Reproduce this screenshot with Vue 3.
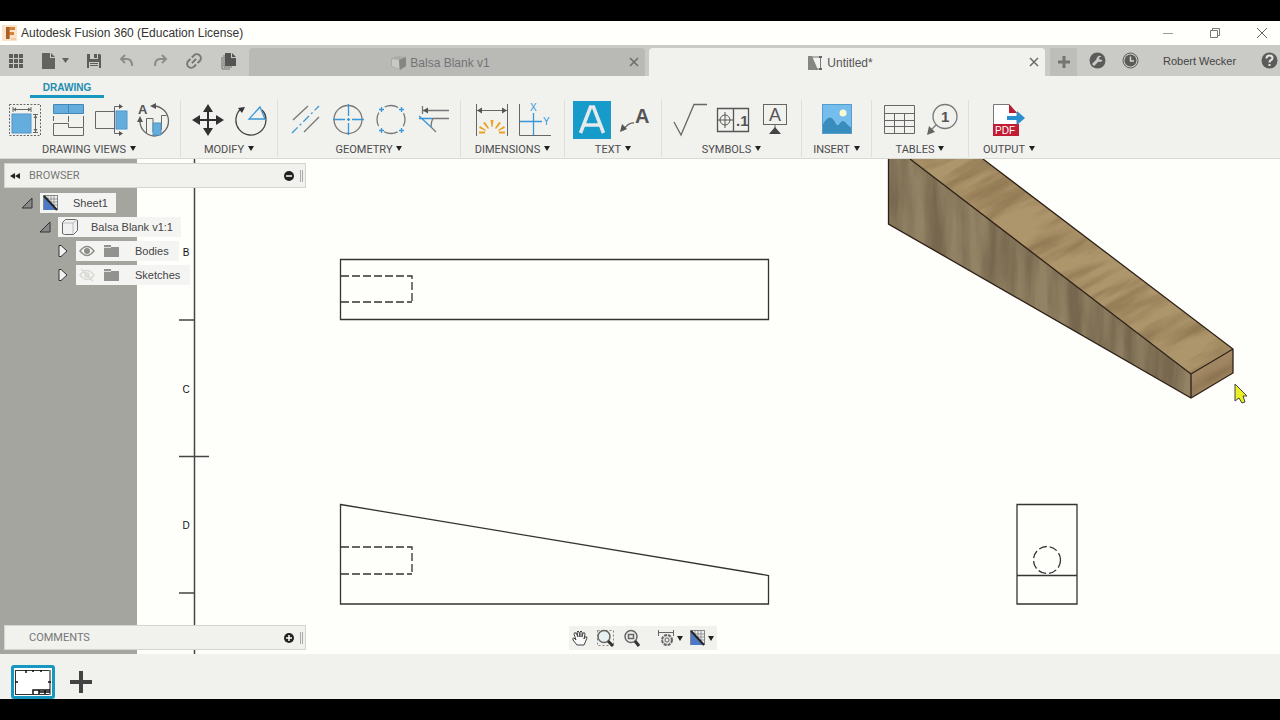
<script setup>
import { ref } from 'vue'

const documentTabs = ref([
  { name: 'Balsa Blank v1', kind: 'model', active: false },
  { name: 'Untitled*', kind: 'drawing', active: true },
])
</script>

<template>
  <div class="app">
    <header class="titlebar">
      <svg class="logo" width="15" height="16" viewBox="0 0 15 16">
        <rect x="0" y="0" width="15" height="16" fill="#fbe3cc" />
        <path d="M4 2h9v3H7.500v2H12v3H7.500v4H4z" fill="#d98434" />
        <path d="M4 2h3.500v12H4z" fill="#a9602a" />
        <path d="M9 14h5" stroke="#e9b27f" />
      </svg>
      <h1>Autodesk Fusion 360 (Education License)</h1>
      <div class="window-buttons">
        <button aria-label="Minimize"><svg width="12" height="12"><path d="M1 6.500h10" stroke="#999" /></svg></button>
        <button aria-label="Restore"><svg width="12" height="12" fill="none" stroke="#777"><path d="M1.500 3.500h7v7h-7zM3.500 3.500v-2h7v7h-2" /></svg></button>
        <button aria-label="Close"><svg width="12" height="12" fill="none" stroke="#666"><path d="M1 1l10 10M11 1L1 11" /></svg></button>
      </div>
    </header>

    <div class="tabbar">
      <div class="quick">
        <button aria-label="Data panel">
          <svg width="16" height="16" fill="#5c5c5a"><path d="M1 1h4v4H1zM6 1h4v4H6zM11 1h4v4h-4zM1 6h4v4H1zM6 6h4v4H6zM11 6h4v4h-4zM1 11h4v4H1zM6 11h4v4H6zM11 11h4v4h-4z" /></svg>
        </button>
        <button aria-label="File">
          <svg width="28" height="18"><path d="M1 1h8v5h5v11H1zM10 1l4 4h-4z" fill="#626260" /><path d="M21 6h7l-3.500 5z" fill="#626260" /></svg>
        </button>
        <button aria-label="Save">
          <svg width="16" height="16"><path d="M1 1h13l1 1v13H1z" fill="#5c5c5a" /><path d="M4 1h8v5H4zM3 9h10v6H3z" fill="#cacac6" /><path d="M8 1h3v4H8zM4 10h8v1H4zM4 12h8v1H4z" fill="#5c5c5a" /></svg>
        </button>
        <button aria-label="Undo">
          <svg width="16" height="16" fill="none" stroke="#8c8c89" stroke-width="2"><path d="M6 2L2 6l4 4M2 6h6q5 0 5 7" /></svg>
        </button>
        <button aria-label="Redo">
          <svg width="16" height="16" fill="none" stroke="#8c8c89" stroke-width="2"><path d="M10 2l4 4-4 4M14 6H8q-5 0-5 7" /></svg>
        </button>
        <button aria-label="Link">
          <svg width="18" height="18" viewBox="0 0 18 18" fill="none" stroke="#777775" stroke-width="2"><g transform="rotate(-45 9 9)"><path d="M8 5H5a4 4 0 0 0 0 8h3M10 5h3a4 4 0 0 1 0 8h-3M6 9h6" /></g></svg>
        </button>
        <button aria-label="Copies">
          <svg width="18" height="18"><path d="M2 5v12h8M4 3v12h8" fill="none" stroke="#70706e" /><path d="M5 1h6v5h5v8H5zM12 1l4 4h-4z" fill="#545452" /></svg>
        </button>
      </div>

      <nav class="tabs" aria-label="Documents">
        <div v-for="tab in documentTabs" :key="tab.name" class="tab" :class="{ active: tab.active }">
          <button class="tab-name">
            <svg v-if="tab.kind === 'model'" width="17" height="16"><path d="M1 3l7-2 8 1v9l-6 4-9-4z" fill="#aaaaa7" /><path d="M2 4l7 1v9l-7-3z" fill="#c8c8c4" /><path d="M9 5l7-3v9l-6 4z" fill="#858583" /></svg>
            <svg v-else width="17" height="16"><path d="M1 1h4l6 14H1z" fill="#858583" /><path d="M5 2h9M13.500 1v13M9 14h5" fill="none" stroke="#777" /><path d="M12 1h3v2h-3zM12 13h3v2h-3z" fill="#666" /></svg>
            <span>{{ tab.name }}</span>
          </button>
          <button class="tab-close" :aria-label="'Close ' + tab.name"><svg width="10" height="10"><path d="M1 1l8 8M9 1L1 9" stroke="#6b6b69" stroke-width="1.500" /></svg></button>
        </div>
      </nav>

      <button class="new-tab" aria-label="New document"><svg width="14" height="14"><path d="M7 1v12M1 7h12" stroke="#747472" stroke-width="3" /></svg></button>
      <div class="account">
        <button aria-label="Extensions"><svg width="17" height="17"><circle cx="8.500" cy="8.500" r="8" fill="#5b5b59" /><path d="M4 13l5-5" stroke="#cacac6" stroke-width="3" /><path d="M12.500 4.500a3 3 0 1 0 1 3.500l-3-.5-.5-2z" fill="#cacac6" /></svg></button>
        <button aria-label="Job status"><svg width="17" height="17"><circle cx="8.500" cy="8.500" r="7.500" fill="none" stroke="#5b5b59" /><circle cx="8.500" cy="8.500" r="6" fill="#5b5b59" /><path d="M8.500 4.500v4.500H12" fill="none" stroke="#d3d3cf" stroke-width="1.500" /></svg></button>
        <button class="user">Robert Wecker</button>
        <button class="help" aria-label="Help"><svg width="17" height="17"><circle cx="8.500" cy="8.500" r="8" fill="#5b5b59" /><path d="M5.500 6.500q0-3 3-3t3 2.500q0 1.500-2 2.500-1 .5-1 2M8.500 12v2" fill="none" stroke="#e4e4e0" stroke-width="2" /></svg></button>
      </div>
    </div>

    <section class="ribbon" aria-label="Ribbon">
      <button class="workspace">DRAWING</button>
      <div class="groups">
        <div class="group first">
          <div class="tools">
            <button aria-label="Base view"><svg viewBox="0 0 40 40" fill="none" stroke="#666">
              <rect x="4.500" y="4.500" width="31" height="31" stroke-dasharray="2 1.500" />
              <rect x="7" y="14" width="19" height="19" fill="#65addd" stroke="#4f96c9" />
              <path d="M8 9.500h18M8 7v5M26 7v5M30.500 15v17M28 14.500h5M28 32.500h5" />
              <path d="M8 9.500l3-2v4zM26 9.500l-3-2v4zM30.500 15l-2 3h4zM30.500 32l-2-3h4z" fill="#666" stroke="none" />
            </svg></button>
            <button aria-label="Projected view"><svg viewBox="0 0 40 40" fill="none" stroke="#666">
              <path d="M5.500 4.500h30v9h-30z" fill="#65addd" stroke="#4288b7" /><path d="M20.500 4v10" stroke="#4288b7" />
              <path d="M5.500 16v5M35.500 16v11M20.500 16v6" /><path d="M5.500 23.500h15v4h15v8h-30z" />
            </svg></button>
            <button aria-label="Section view"><svg viewBox="0 0 40 40" fill="none" stroke="#666">
              <path d="M23 11.500H4.500v17H23" /><rect x="25" y="11" width="11" height="18" fill="#65addd" stroke="#4f96c9" />
              <path d="M30 6.500h-6.500v27H30" /><path d="M28 4l4 2.500-4 2.500zM28 31l4 2.500-4 2.500z" fill="#555" stroke="none" />
            </svg></button>
            <button aria-label="Detail view"><svg viewBox="0 0 40 40" fill="none" stroke="#666">
              <path d="M19 6a15 15 0 0 1 1 30A15 15 0 0 1 6 20" stroke-width="1.300" />
              <path d="M12.500 33V18.500H19V32M27.500 30V15.500h5" /><path d="M19 23h8v12h-8z" fill="#65addd" stroke="#4f96c9" />
              <path d="M16 6l6-3v6zM6 16l-3 6h6z" fill="#555" stroke="none" />
              <text x="4" y="14" class="glyph bold" font-size="13">A</text>
            </svg></button>
          </div>
          <button class="label">DRAWING VIEWS<i class="caret"></i></button>
        </div>

        <div class="group">
          <div class="tools">
            <button aria-label="Move"><svg viewBox="0 0 40 40" fill="#303030">
              <path d="M20 10v20M10 20h20" stroke="#303030" stroke-width="2" /><path d="M20 4l5 8H15zM20 36l5-8H15zM4 20l8-5v10zM36 20l-8-5v10z" />
            </svg></button>
            <button aria-label="Rotate"><svg viewBox="0 0 40 40" fill="none">
              <path d="M11 8A15 15 0 1 0 31 10Q35 14 35 19" stroke="#444" stroke-width="1.300" /><path d="M34 19H18L29 7z" stroke="#3997d7" stroke-width="1.300" />
              <path d="M7 8l7-1-3 6z" fill="#333" />
            </svg></button>
          </div>
          <button class="label">MODIFY<i class="caret"></i></button>
        </div>

        <div class="group">
          <div class="tools">
            <button aria-label="Centerline"><svg viewBox="0 0 40 40" fill="none" stroke="#777" stroke-width="1.300">
              <path d="M8 20L23 6M19 32l15-15" /><path d="M7 33L34 6" stroke="#3997d7" stroke-dasharray="8 3 2 3" />
            </svg></button>
            <button aria-label="Center mark"><svg viewBox="0 0 40 40" fill="none" stroke="#777" stroke-width="1.300">
              <circle cx="20" cy="19.500" r="14" /><path d="M5 19.500h12M19 19.500h3M24 19.500h12M20.500 4v12M20.500 18v3M20.500 23v12" stroke="#3997d7" />
            </svg></button>
            <button aria-label="Center mark pattern"><svg viewBox="0 0 40 40" fill="none" stroke="#777" stroke-width="1.300">
              <circle cx="20" cy="19.500" r="14" stroke-dasharray="14 8" stroke-dashoffset="7" />
              <path d="M8 9.500h5M10.500 7v5M28 9.500h5M30.500 7v5M8 30.500h5M10.500 28v5M28 30.500h5M30.500 28v5" stroke="#3997d7" />
            </svg></button>
            <button aria-label="Edge extension"><svg viewBox="0 0 40 40" fill="none" stroke="#777" stroke-width="1.300">
              <path d="M8.500 6v8M9 10.500h26M18 18.500h17M17 27l5 5M19 18q-2 4-2 9" /><path d="M5 18.500h13M5 16l12 11" stroke="#3997d7" />
              <path d="M9 10.500l5-3v6z" fill="#555" stroke="none" />
            </svg></button>
          </div>
          <button class="label">GEOMETRY<i class="caret"></i></button>
        </div>

        <div class="group wide">
          <div class="tools">
            <button aria-label="Dimension"><svg viewBox="0 0 40 40" fill="none" stroke="#666">
              <path d="M5.500 4v32M36.500 4v32M6 10.500h30" /><path d="M6 10.500l5-3v6zM36 10.500l-5-3v6z" fill="#555" stroke="none" />
              <path d="M19.500 20h3l-1 7h-1zM12 23l2-1 4 6-1 1zM30 23l-2-1-4 6 1 1zM8 28l1-2 6 4v1zM34 28l-1-2-6 4v1zM8 31.500h6v2H8zM34 31.500h-6v2h6z" fill="#eca126" stroke="none" />
            </svg></button>
            <button aria-label="Ordinate dimension"><svg viewBox="0 0 40 40" fill="none" stroke="#666">
              <path d="M5.500 4v31.500H37" /><path d="M6 21.500h22M19.500 13v22" stroke="#3997d7" stroke-width="1.300" />
              <text x="16" y="11" class="glyph blue" font-size="10">X</text><text x="29" y="25" class="glyph blue" font-size="10">Y</text>
            </svg></button>
          </div>
          <button class="label">DIMENSIONS<i class="caret"></i></button>
        </div>

        <div class="group">
          <div class="tools">
            <button aria-label="Text" aria-pressed="true"><svg viewBox="0 0 40 40">
              <rect x="1" y="1" width="38" height="38" fill="#179bcb" /><path d="M8.500 33L18.500 7h3l10 26M12 25h16" fill="none" stroke="#e5ebea" stroke-width="3.500" />
            </svg></button>
            <button aria-label="Leader note"><svg viewBox="0 0 40 40" fill="none" stroke="#666">
              <path d="M19 23q-5-1-11 7" stroke-width="1.300" /><path d="M5 32l2-8 5 5z" fill="#555" stroke="none" />
              <text x="20" y="23" class="glyph bold" font-size="20">A</text>
            </svg></button>
          </div>
          <button class="label">TEXT<i class="caret"></i></button>
        </div>

        <div class="group">
          <div class="tools">
            <button aria-label="Surface texture"><svg viewBox="0 0 40 40" fill="none" stroke="#666" stroke-width="1.300"><path d="M5 22l7 13L25 4.500h13" /></svg></button>
            <button aria-label="Feature control frame"><svg viewBox="0 0 40 40" fill="none" stroke="#555">
              <path d="M5.500 8.500h31v23h-31zM21.500 8.500v23" stroke-width="1.300" /><circle cx="13" cy="20" r="5" /><path d="M5 20h16M13 12v16" />
              <text x="24" y="26" class="glyph bold" font-size="15">.1</text>
            </svg></button>
            <button aria-label="Datum identifier"><svg viewBox="0 0 40 40" fill="none" stroke="#666">
              <rect x="8.500" y="4.500" width="23" height="20" /><path d="M20 24v5" /><path d="M20 27l6 7H14z" fill="#444" stroke="none" />
              <text x="14" y="21" class="glyph" font-size="18">A</text>
            </svg></button>
          </div>
          <button class="label">SYMBOLS<i class="caret"></i></button>
        </div>

        <div class="group insert">
          <div class="tools">
            <button aria-label="Insert image"><svg viewBox="0 0 40 40">
              <rect x="5" y="4" width="30" height="30" fill="#74bdec" /><path d="M5 26q8-16 14-2 2 3 4-1 3-4 6 0t6 5v6H5z" fill="#398dbd" /><circle cx="26" cy="13" r="3.500" fill="#fbf9cf" />
              <rect x="5.500" y="4.500" width="29" height="29" fill="none" stroke="#559dcc" />
            </svg></button>
          </div>
          <button class="label">INSERT<i class="caret"></i></button>
        </div>

        <div class="group">
          <div class="tools">
            <button aria-label="Table"><svg viewBox="0 0 40 40" fill="none" stroke="#666"><path d="M5.500 5.500h30v28h-30zM5.500 13.500h30M5.500 20.500h30M5.500 26.500h30M15.500 13.500v20M25.500 13.500v20" /></svg></button>
            <button aria-label="Balloon"><svg viewBox="0 0 40 40" fill="none" stroke="#777">
              <circle cx="23" cy="16.500" r="12" stroke-width="1.300" /><path d="M14 25l-6 6" stroke-width="1.300" /><path d="M5 35l2-9 6 6z" fill="#666" stroke="none" />
              <text x="19" y="22" class="glyph bold" font-size="15">1</text>
            </svg></button>
          </div>
          <button class="label">TABLES<i class="caret"></i></button>
        </div>

        <div class="group last">
          <div class="tools">
            <button aria-label="Export PDF"><svg viewBox="0 0 40 40">
              <path d="M4.500 4.500H20l8 9V35H4.500z" fill="#fff" stroke="#777" /><path d="M20 4l8 9h-8z" fill="#b91c33" /><path d="M4 24h26v12H4z" fill="#c21c34" />
              <path d="M18 16h10v-5l8 7-8 7v-5H18z" fill="#288fd1" /><text x="6" y="34" class="glyph white" font-size="10">PDF</text>
            </svg></button>
          </div>
          <button class="label">OUTPUT<i class="caret"></i></button>
        </div>
      </div>
    </section>

    <main class="workarea">
      <svg class="sheet" width="100%" height="100%" role="img" aria-label="Drawing sheet">
        <defs>
          <filter id="grainSide" x="0" y="0" width="100%" height="100%" color-interpolation-filters="sRGB">
            <feTurbulence type="fractalNoise" baseFrequency="0.060 0.008" numOctaves="4" seed="8" />
            <feColorMatrix values="0 0 0 0 .26  0 0 0 0 .21  0 0 0 0 .15  2.400 0 0 0 -.8" />
          </filter>
          <filter id="grainTop" x="0" y="0" width="100%" height="100%" color-interpolation-filters="sRGB">
            <feTurbulence type="fractalNoise" baseFrequency="0.012 0.070" numOctaves="4" seed="5" />
            <feColorMatrix values="0 0 0 0 .34  0 0 0 0 .25  0 0 0 0 .14  2.200 0 0 0 -.85" />
          </filter>
          <clipPath id="sideFace"><path d="M888 0h22l281 215v24L888 65z" /></clipPath>
          <clipPath id="topFace"><path d="M910 0h73l250 190-42 25z" /></clipPath>
          <clipPath id="endFace"><path d="M1191 215l42-25v24l-42 25z" /></clipPath>
        </defs>
        <rect width="137" height="100%" fill="#a5a5a0" />
        <g fill="none" stroke="#444" stroke-width="1.500">
          <path d="M194.500 0v495M179 161h15M179 297.500h30M179 434h15" />
        </g>
        <g class="zone"><text x="186" y="97">B</text><text x="186" y="234">C</text><text x="186" y="370">D</text></g>
        <g fill="none" stroke="#333" stroke-width="1.300">
          <path d="M340.500 100.500h428v60h-428zM340.500 345.500l428 71v28.500h-428z" />
          <path d="M1017 345.500h60v99.500h-60zM1017 416.500h60" />
          <g stroke-dasharray="8 3">
            <path d="M341 117h71v26M341 143h71M341 388h71v27M341 415h71" /><circle cx="1047" cy="401" r="13.500" />
          </g>
        </g>
        <g clip-path="url(#sideFace)">
          <rect x="888" y="0" width="304" height="240" fill="#938365" /><rect x="888" y="0" width="304" height="240" filter="url(#grainSide)" opacity=".35" />
        </g>
        <g clip-path="url(#topFace)">
          <rect x="900" y="0" width="340" height="220" fill="#ae966c" /><rect x="850" y="-150" width="440" height="500" transform="rotate(-28 1070 100)" filter="url(#grainTop)" opacity=".38" />
        </g>
        <g clip-path="url(#endFace)">
          <rect x="1190" y="185" width="44" height="56" fill="#a68c67" /><rect x="1160" y="170" width="100" height="90" transform="rotate(-30 1210 210)" filter="url(#grainTop)" opacity=".3" />
        </g>
        <path d="M888.500 0v65L1191 239l42-25v-24L983 0M910 0l281 215v24M1191 215l42-25" fill="none" stroke="#2f2118" stroke-width="1.300" />
        <path d="M1235 225v17l4-3 3 5 3-1-2-6h4z" fill="#e9ef25" stroke="#444" />
      </svg>

      <aside class="overlay">
        <div class="panel">
          <button class="collapse" aria-label="Collapse browser"><svg width="12" height="8"><path d="M6 1v6L1 4zM11 1v6L6 4z" fill="#222" /></svg></button>
          <h2>BROWSER</h2>
          <button class="round" aria-label="Hide browser"><svg width="10" height="10"><circle cx="5" cy="5" r="5" fill="#222" /><path d="M2 5h6" stroke="#fff" stroke-width="1.500" /></svg></button>
          <i class="grip"></i>
        </div>
        <ul class="tree">
          <li class="level1">
            <button class="toggle" aria-label="Collapse Sheet1"><svg width="14" height="14"><path d="M2 12h10V2z" fill="#898989" stroke="#333" /></svg></button>
            <button class="node">
              <svg width="16" height="16"><rect x=".5" y=".5" width="14" height="14" fill="#eee" stroke="#888" /><path d="M5 1v14M8 1v14M11 1v14M1 4h14M1 7h14M1 10h14" stroke="#777" stroke-width=".7" /><path d="M1 2l12 13H1z" fill="#4d79c7" /><path d="M1 1l13 14" stroke="#222" stroke-width="2" /></svg>
              <span>Sheet1</span>
            </button>
          </li>
          <li class="level2">
            <button class="toggle" aria-label="Collapse Balsa Blank"><svg width="14" height="14"><path d="M2 12h10V2z" fill="#898989" stroke="#333" /></svg></button>
            <button class="node">
              <svg width="18" height="18" fill="#f1f1f3" stroke="#666"><path d="M1.500 4.500l3-3h10l2 1v10l-4 4h-9l-2-1z" /><path d="M2 5h10v11M12 5l4-3" fill="none" stroke="#bbb" /></svg>
              <span>Balsa Blank v1:1</span>
            </button>
          </li>
          <li class="level3">
            <button class="toggle" aria-label="Expand Bodies"><svg width="14" height="14"><path d="M3 1.500h2l6 5.500-6 5.500H3z" fill="#f2f2f2" stroke="#333" /></svg></button>
            <button class="node">
              <svg width="16" height="14" fill="none"><path d="M1 7q7-9 14 0-7 9-14 0z" stroke="#8c8c89" stroke-width="1.500" /><circle cx="8" cy="7" r="3" fill="#8c8c89" /></svg>
              <svg width="17" height="14"><path d="M1 1h7v2h8v10H1z" fill="#92928e" /><path d="M1 3.500h7" stroke="#deded9" /></svg>
              <span>Bodies</span>
            </button>
          </li>
          <li class="level3">
            <button class="toggle" aria-label="Expand Sketches"><svg width="14" height="14"><path d="M3 1.500h2l6 5.500-6 5.500H3z" fill="#f2f2f2" stroke="#333" /></svg></button>
            <button class="node">
              <svg width="16" height="14" fill="none" stroke="#d9d9d6" stroke-width="1.500"><path d="M1 7q7-9 14 0-7 9-14 0zM2 1l12 12" /><circle cx="8" cy="7" r="2" /></svg>
              <svg width="17" height="14"><path d="M1 1h7v2h8v10H1z" fill="#92928e" /><path d="M1 3.500h7" stroke="#deded9" /></svg>
              <span>Sketches</span>
            </button>
          </li>
        </ul>
        <div class="panel comments">
          <h2>COMMENTS</h2>
          <button class="round" aria-label="Show comments"><svg width="10" height="10"><circle cx="5" cy="5" r="5" fill="#222" /><path d="M2 5h6M5 2v6" stroke="#fff" stroke-width="1.500" /></svg></button>
          <i class="grip"></i>
        </div>
      </aside>

      <div class="navigation">
        <div class="navbar">
          <button aria-label="Pan"><svg width="18" height="18" fill="#fafafa" stroke="#444"><path d="M6 16l-4-5q-1-2 1-2l2 2-2-6q0-2 2-1l2 4-1-5q1-2 2 0l1 5V3q1-2 2 0v5l1-4q2-1 2 1l-1 5 1-2q2-1 2 1l-3 7z" /></svg></button>
          <button aria-label="Zoom window"><svg width="20" height="18" fill="none"><path d="M1.500 1.500h16v15h-16z" stroke="#888" stroke-dasharray="2 2" /><circle cx="8" cy="7.500" r="6" fill="#e5f0f0" stroke="#666" stroke-width="1.500" /><path d="M12 12l5 5" stroke="#333" stroke-width="3" /></svg></button>
          <button aria-label="Fit"><svg width="20" height="18" fill="none"><circle cx="8" cy="7.500" r="6" fill="#eee" stroke="#666" stroke-width="1.500" /><path d="M5.500 5.500h5v4h-5z" stroke="#666" stroke-width="1.500" /><path d="M12 12l4 5" stroke="#333" stroke-width="3" /></svg></button>
          <button aria-label="Annotation settings" class="menu"><svg width="18" height="18" fill="none" stroke="#666"><path d="M1 3.500h16M1.500 1v6M16.500 1v6" /><circle cx="10" cy="11" r="5" stroke-width="2" stroke-dasharray="3 1" fill="#ddd" /><circle cx="10" cy="11" r="2" fill="#f1f1ee" /></svg><i class="caret"></i></button>
          <button aria-label="Sheet display" class="menu"><svg width="16" height="16"><rect x=".5" y=".5" width="14" height="14" fill="#eee" stroke="#888" /><path d="M5 1v14M8 1v14M11 1v14M1 4h14M1 7h14M1 10h14" stroke="#777" stroke-width=".7" /><path d="M1 2l12 13H1z" fill="#4d79c7" /><path d="M1 1l13 14" stroke="#222" stroke-width="2" /></svg><i class="caret"></i></button>
        </div>
      </div>
    </main>

    <footer class="sheets">
      <button class="thumb" aria-label="Sheet 1"><svg width="38" height="28"><rect x="1.500" y="2.500" width="35" height="24" fill="#fff" stroke="#333" /><path d="M36 2v25" stroke="#888" stroke-width="2" /><path d="M19 26v-4h17M25 24h11M25 22v4M31 22v4M1 14h3M34 14h3M12 2v3M19 2v2M27 2v2" stroke="#111" fill="none" stroke-width="1.500" /></svg></button>
      <button class="add" aria-label="Add sheet"><svg width="22" height="22"><path d="M11 0v22M0 11h22" stroke="#434343" stroke-width="4" /></svg></button>
    </footer>
  </div>
</template>

<style>
body { background: #000; }
</style>

<style scoped>
* { box-sizing: border-box; }
.app {
  min-height: 100vh; padding: 21px 0; display: flex; flex-direction: column; overflow: hidden;
  background: #000; color: #4c4c4c; font: 11px/14px "Liberation Sans", Arial, sans-serif;
}
button { border: 0; padding: 0; margin: 0; background: none; color: inherit; font: inherit; display: flex; align-items: center; justify-content: center; white-space: nowrap; }
svg { display: block; flex: none; }
h1, h2, ul { margin: 0; padding: 0; font: inherit; }

.titlebar { height: 24px; display: flex; align-items: center; gap: 4px; padding: 0 12px 0 2px; background: #fffffc; }
.titlebar h1 { flex: 1; font: 12px/16px "Liberation Sans", sans-serif; color: #333; }
.window-buttons { display: flex; gap: 35px; }
.window-buttons button { width: 12px; height: 16px; }

.tabbar { height: 31px; display: flex; background: #cacac6; }
.quick { width: 249px; display: flex; align-items: center; padding-left: 8px; gap: 17px; }
.tabs { flex: 1; display: flex; gap: 4px; padding-top: 3px; min-width: 0; }
.tab { flex: 1; display: flex; align-items: center; padding-right: 5px; background: #b9b9b5; color: #747476; border-radius: 4px 4px 0 0; }
.tab.active { background: #f1f1ee; color: #555; }
.tab-name { flex: 1; gap: 3px; padding: 2px 0 0 3px; font-size: 12px; }
.tab-close { width: 12px; height: 20px; }
.new-tab { width: 27px; margin: 3px 0 0 5px; background: #bdbdb9; }
.account { width: 203px; display: flex; align-items: center; padding-left: 12px; overflow: hidden; }
.account button { margin-right: 16px; flex: none; }
.account .user { margin: 0 25px 0 8px; color: #444; }
.account .help { margin: 0; }

.ribbon { height: 83px; background: #f1f1ee; border-bottom: 1px solid #d9d9d6; }
.workspace { height: 22px; width: 74px; padding-top: 4px; margin-left: 30px; border-bottom: 3px solid #1998bf; color: #248cb0; font-weight: bold; font-size: 10px; }
.groups { display: flex; padding-top: 2px; }
.group { padding: 0 5px; border-right: 1px solid #dededa; min-width: 70px; height: 57px; display: flex; flex-direction: column; align-items: center; }
.group.first { padding-left: 3px; }
.group.wide { min-width: 104px; }
.group.last { min-width: 80px; border: 0; }
.tools { display: flex; }
.tools button { width: 43px; height: 40px; }
.tools svg { width: 40px; height: 40px; }
.label { height: 18px; padding-top: 2px; gap: 4px; font-family: Roboto, sans-serif; }
.caret { width: 0; height: 0; border: 3px solid transparent; border-top: 5px solid #222; border-bottom: 0; }
.label .caret { margin-bottom: 2px; }
.glyph { font-family: "Liberation Sans", sans-serif; fill: #555; stroke: none; }
.glyph.bold { font-weight: bold; }
.glyph.blue { fill: #3997d7; }
.glyph.white { fill: #fff; }

.workarea { position: relative; flex: 1; min-height: 495px; overflow: hidden; background: #fefffb; }
.sheet { position: absolute; inset: 0; }
.zone { font: 10px "Liberation Sans", sans-serif; fill: #111; text-anchor: middle; }
.overlay { position: absolute; top: 4px; bottom: 4px; left: 4px; width: 302px; display: flex; flex-direction: column; }
.panel { height: 25px; flex: none; display: flex; align-items: center; padding: 0 2px 0 4px; background: #f1f1ee; border: 1px solid #d4d4d0; color: #777; }
.collapse { width: 12px; height: 20px; }
.panel h2 { flex: 1; margin-left: 8px; font-family: Roboto, sans-serif; }
.panel.comments h2 { margin-left: 20px; }
.round { width: 14px; height: 20px; }
.grip { width: 3px; height: 12px; margin-left: 4px; border-left: 1px solid #aaa; border-right: 1px solid #aaa; }
.tree { flex: 1; list-style: none; padding-top: 3px; }
.tree li { height: 24px; display: flex; align-items: center; }
.level1 { padding-left: 15px; }
.level2 { padding-left: 33px; }
.level3 { padding-left: 51px; }
.toggle { width: 15px; height: 20px; margin-right: 6px; }
.node { height: 20px; padding: 0 8px 0 3px; gap: 8px; background: #f4f4f2; color: #444; }
.level1 .node span { margin-left: 6px; }
.level2 .node span { margin-left: 4px; }
.level3 .node span { margin-left: 7px; }
.level3 .node { padding-right: 10px; }

.navigation { position: absolute; left: 0; right: 0; bottom: 4px; padding-left: 6px; display: flex; justify-content: center; }
.navbar { height: 24px; width: 148px; display: flex; align-items: center; gap: 7px; padding-left: 2px; background: #f1f1ee; }
.menu { gap: 2px; }
.navbar .menu:nth-child(4) { margin-left: 7px; }

.sheets { height: 45px; display: flex; align-items: center; gap: 15px; padding: 11px 0 0 11px; background: #f1f1ee; }
.thumb { width: 44px; height: 34px; border: 3px solid #1697bf; border-radius: 3px; background: #fff; }
.add { height: 32px; }
</style>
